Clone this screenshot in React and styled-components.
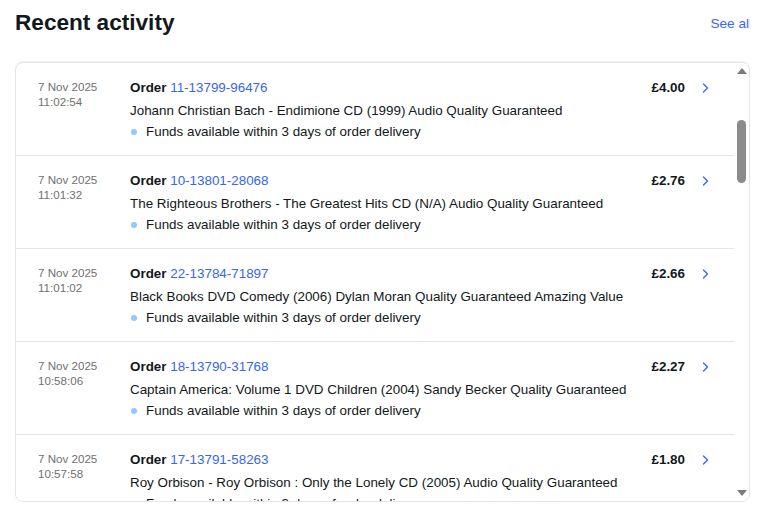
import React from 'react'
import styled, { createGlobalStyle, css } from 'styled-components'

const GlobalStyle = createGlobalStyle`
  html, body {
    margin: 0;
    padding: 0;
    background: #ffffff;
    font-family: "Liberation Sans", Arial, sans-serif;
    color: #111820;
  }
`

const Page = styled.div`
  width: 735px;
  padding: 7px 0 0 15px;
  overflow: hidden;
`

const Header = styled.div`
  display: flex;
  align-items: center;
  justify-content: space-between;
  height: 32px;
  margin-bottom: 23px;
`

const Title = styled.h2`
  margin: 0;
  font-size: 22.6px;
  font-weight: 700;
  color: #111820;
`

const SeeAll = styled.a`
  font-size: 13.6px;
  color: #3665f3;
  text-decoration: none;
  margin-right: -2px;
`

const Card = styled.div`
  display: flex;
  height: 438px;
  border: 1px solid #e5e5e5;
  border-radius: 8px;
  box-shadow: 0 -1px 0 #f0f0f0;
  overflow: hidden;
`

const List = styled.div`
  flex: 1;
  min-width: 0;
  overflow: hidden;
`

const ScrollBar = styled.div`
  width: 15px;
  flex-shrink: 0;
  display: flex;
  flex-direction: column;
  background: #ffffff;
`

const ArrowButton = styled.div`
  height: 15px;
  display: flex;
  align-items: center;
  justify-content: center;

  &::after {
    content: '';
    width: 0;
    height: 0;
    border-left: 5px solid transparent;
    border-right: 5px solid transparent;
    ${(p) =>
      p.$dir === 'up'
        ? css`
            border-bottom: 6px solid #7a7a7a;
          `
        : css`
            border-top: 6px solid #7a7a7a;
            margin-top: -1px;
          `}
  }
`

const Track = styled.div`
  flex: 1;
  padding-top: 42px;
`

const Thumb = styled.div`
  width: 9px;
  height: 63px;
  margin: 0 auto;
  border-radius: 5px;
  background: #8b8b8b;
`

const Row = styled.div`
  display: flex;
  align-items: flex-start;
  height: 93px;
  border-bottom: 1px solid #e5e5e5;
  box-sizing: border-box;
  padding: 16px 0 0 22px;
`

const DateCol = styled.div`
  width: 92px;
  flex-shrink: 0;
  font-size: 11.6px;
  line-height: 15px;
  color: #707070;
`

const Main = styled.div`
  flex: 1;
  min-width: 0;
  font-size: 13.4px;
`

const OrderLine = styled.div`
  line-height: 17px;
  margin-bottom: 6px;
  b {
    font-weight: 700;
  }
  a {
    color: #3665f3;
    text-decoration: none;
  }
`

const ItemTitle = styled.div`
  line-height: 17px;
  margin-bottom: 4px;
  white-space: nowrap;
`

const Funds = styled.div`
  display: flex;
  align-items: center;
  gap: 9px;
  line-height: 17px;
  white-space: nowrap;
  &::before {
    content: '';
    width: 6px;
    height: 6px;
    margin-left: 1px;
    border-radius: 50%;
    background: #8ec9ff;
  }
`

const Price = styled.div`
  width: 60px;
  text-align: right;
  font-size: 13.4px;
  font-weight: 700;
  line-height: 17px;
  flex-shrink: 0;
`

const Chevron = styled.div`
  width: 40px;
  margin-right: 9px;
  display: flex;
  justify-content: center;
  padding-top: 4px;
  flex-shrink: 0;
`

const orders = [
  { date: '7 Nov 2025', time: '11:02:54', id: '11-13799-96476', title: 'Johann Christian Bach - Endimione CD (1999) Audio Quality Guaranteed', price: '£4.00' },
  { date: '7 Nov 2025', time: '11:01:32', id: '10-13801-28068', title: 'The Righteous Brothers - The Greatest Hits CD (N/A) Audio Quality Guaranteed', price: '£2.76' },
  { date: '7 Nov 2025', time: '11:01:02', id: '22-13784-71897', title: 'Black Books DVD Comedy (2006) Dylan Moran Quality Guaranteed Amazing Value', price: '£2.66' },
  { date: '7 Nov 2025', time: '10:58:06', id: '18-13790-31768', title: 'Captain America: Volume 1 DVD Children (2004) Sandy Becker Quality Guaranteed', price: '£2.27' },
  { date: '7 Nov 2025', time: '10:57:58', id: '17-13791-58263', title: 'Roy Orbison - Roy Orbison : Only the Lonely CD (2005) Audio Quality Guaranteed', price: '£1.80' },
]

const ChevronIcon = () => (
  <svg width="7" height="10" viewBox="0 0 7 10" fill="none">
    <polyline points="1.5,1 5.5,5 1.5,9" stroke="#3665f3" strokeWidth="1.3" strokeLinecap="round" strokeLinejoin="round" />
  </svg>
)

const App = () => {
  return (
    <Page>
      <GlobalStyle />
      <Header>
        <Title>Recent activity</Title>
        <SeeAll href="#">See all</SeeAll>
      </Header>
      <Card>
        <List>
          {orders.map((o) => (
            <Row key={o.id}>
              <DateCol>
                {o.date}
                <br />
                {o.time}
              </DateCol>
              <Main>
                <OrderLine>
                  <b>Order</b> <a href="#">{o.id}</a>
                </OrderLine>
                <ItemTitle>{o.title}</ItemTitle>
                <Funds>Funds available within 3 days of order delivery</Funds>
              </Main>
              <Price>{o.price}</Price>
              <Chevron>
                <ChevronIcon />
              </Chevron>
            </Row>
          ))}
        </List>
        <ScrollBar>
          <ArrowButton $dir="up" />
          <Track>
            <Thumb />
          </Track>
          <ArrowButton $dir="down" />
        </ScrollBar>
      </Card>
    </Page>
  )
}

export default App
